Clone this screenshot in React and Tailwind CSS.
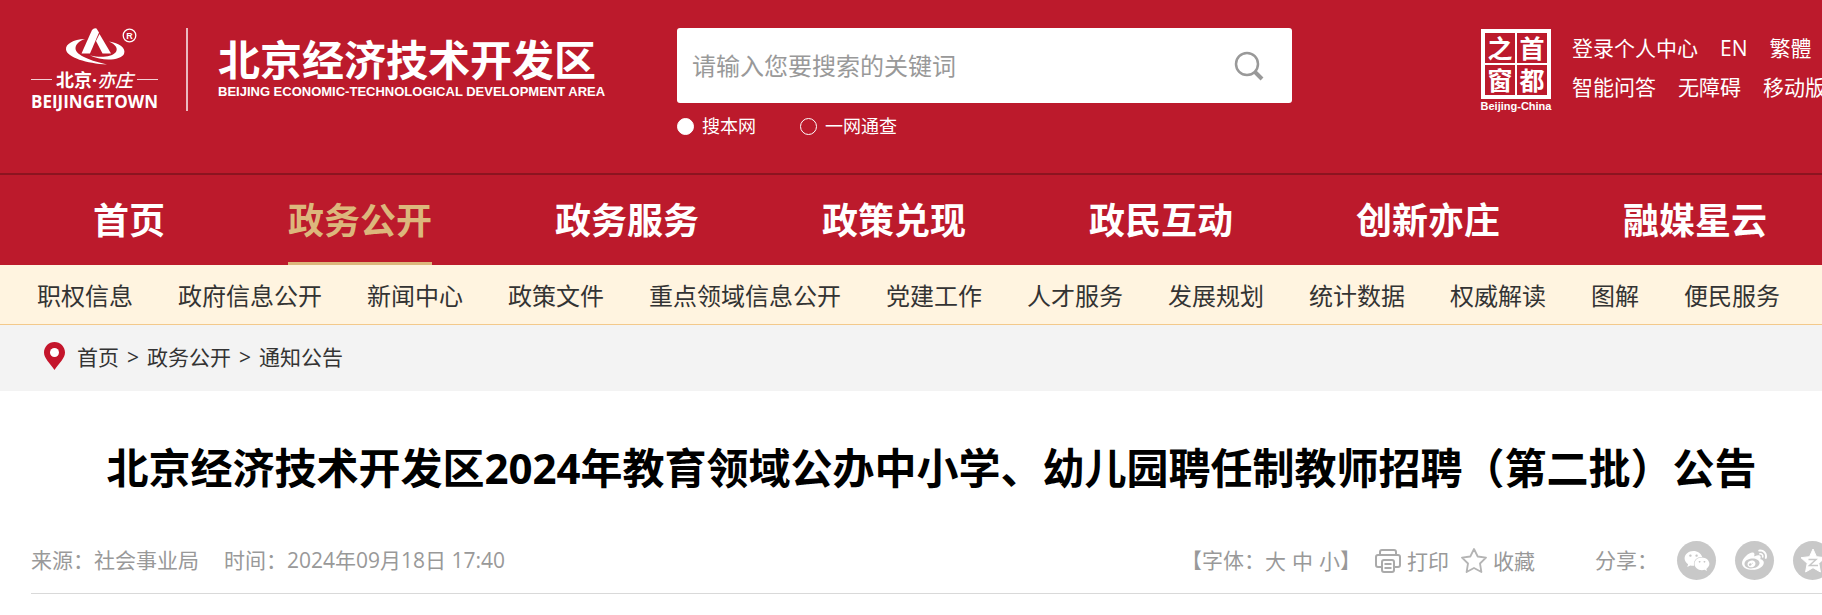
import { FaWeibo, FaWeixin } from 'react-icons/fa';

const mainNav = ['首页', '政务公开', '政务服务', '政策兑现', '政民互动', '创新亦庄', '融媒星云'];

const subNav = [
  '职权信息',
  '政府信息公开',
  '新闻中心',
  '政策文件',
  '重点领域信息公开',
  '党建工作',
  '人才服务',
  '发展规划',
  '统计数据',
  '权威解读',
  '图解',
  '便民服务',
];

const crumbs = ['首页', '政务公开', '通知公告'];

const Emblem = () => (
  <svg viewBox="0 0 72 38" className="h-[38px] w-[72px] shrink-0 ml-[34px]" fill="#fff" aria-hidden="true">
    <path d="M20 11C8 11.500 0.500 16 1 21.500C2 29.500 22 35.500 42 36.500C27 33 10.500 27.500 10.500 20.500C10.500 16.500 14 13 20 11Z" />
    <path d="M44 13.500C51 16.500 53.500 21 50.500 24.500C46 29 36 30 25 27.500C39 34 56 32 59 26C61.500 20 54 15 44 13.500Z" />
    <path d="M16.500 25.500L27 2Q29 -0.500 31.500 0.500L34 4.500L25 25.500Z" />
    <path d="M34.500 6L46 25.500H37.500L31 13Z" />
    <circle cx="64.500" cy="7.500" r="6.300" fill="none" stroke="#fff" strokeWidth="1.300" />
    <text x="64.500" y="11" textAnchor="middle" fontSize="9" fontFamily="Liberation Sans" fontWeight="700">R</text>
  </svg>
);

const Logo = () => (
  <a href="#" className="flex text-white">
    <div className="flex w-[127px] flex-col">
      <Emblem />
      <div className="flex h-[27px] items-center gap-1">
        <span className="h-px flex-1 bg-white/80" />
        <span className="flex items-center text-[18px] leading-7 font-bold">
          北京·
          <span className="text-[18px] font-medium italic">亦庄</span>
        </span>
        <span className="h-px flex-1 bg-white/80" />
      </div>
      <div className="text-[17px] leading-[18px] font-bold">BEIJINGETOWN</div>
    </div>
    <div className="ml-7 h-[83px] w-[2px] bg-white/70" />
    <div className="ml-[30px] pt-[10px]">
      <div className="text-[42px] leading-[44px] font-bold">北京经济技术开发区</div>
      <div className="font-['Liberation_Sans',sans-serif] text-[13px] leading-5 font-bold whitespace-nowrap">
        BEIJING ECONOMIC-TECHNOLOGICAL DEVELOPMENT AREA
      </div>
    </div>
  </a>
);

const SearchForm = () => (
  <form className="flex-1" onSubmit={(e) => e.preventDefault()}>
    <div className="flex h-[75px] items-center rounded-[3px] bg-white pr-7 pl-[15px]">
      <input
        type="text"
        aria-label="搜索"
        placeholder="请输入您要搜索的关键词"
        className="min-w-0 flex-1 text-[24px] leading-8 text-[#333] outline-none placeholder:text-[#999]"
      />
      <button type="submit" aria-label="搜索">
        <svg viewBox="0 0 30 30" className="size-[30px]" fill="none" stroke="#999" aria-hidden="true">
          <circle cx="13" cy="13" r="11" strokeWidth="2.500" />
          <path d="M21 21L28 28" strokeWidth="4" />
        </svg>
      </button>
    </div>
    <div className="mt-[11px] flex gap-11 text-[18px] leading-6 text-white">
      <label className="flex items-center gap-2">
        <input
          type="radio"
          name="scope"
          defaultChecked
          className="size-[17px] appearance-none rounded-full border border-white checked:bg-white"
        />
        搜本网
      </label>
      <label className="flex items-center gap-2">
        <input
          type="radio"
          name="scope"
          className="size-[17px] appearance-none rounded-full border border-white checked:bg-white"
        />
        一网通查
      </label>
    </div>
  </form>
);

const CapitalWindow = () => (
  <a href="#" className="flex w-[70px] shrink-0 flex-col items-center text-white">
    <div className="grid size-[70px] grid-cols-2 gap-[2px] border-4 border-white bg-white">
      {['之', '首', '窗', '都'].map((char) => (
        <span
          key={char}
          className="flex items-center justify-center bg-[#bc1a2c] text-[25px] leading-7 font-bold"
        >
          {char}
        </span>
      ))}
    </div>
    <span className="font-['Liberation_Sans',sans-serif] text-[11px] leading-[14px] font-bold whitespace-nowrap">
      Beijing-China
    </span>
  </a>
);

const Header = () => (
  <header className="overflow-hidden border-b-2 border-[#8c1420] bg-[#bc1a2c]">
    <div className="-mr-2 ml-[31px] flex h-[173px] items-start pt-7">
      <div className="w-[646px] shrink-0">
        <Logo />
      </div>
      <SearchForm />
      <div className="ml-[189px] flex w-[349px] shrink-0 gap-[21px] pt-px">
        <CapitalWindow />
        <div className="text-[21px] leading-[39px] whitespace-nowrap text-white">
          <div className="flex gap-[22px]">
            <a href="#">登录个人中心</a>
            <a href="#">EN</a>
            <a href="#">繁體</a>
          </div>
          <div className="flex gap-[22px]">
            <a href="#">智能问答</a>
            <a href="#">无障碍</a>
            <a href="#">移动版</a>
          </div>
        </div>
      </div>
    </div>
  </header>
);

const Nav = () => (
  <nav>
    <div className="flex h-[90px] justify-between bg-[#bc1a2c] pr-[55px] pl-[93px]">
      {mainNav.map((item) => (
        <a
          key={item}
          href="#"
          className={
            item === '政务公开'
              ? 'border-b-[3px] border-[#dcb77c] text-[36px] leading-[92px] font-bold text-[#dcb77c]'
              : 'text-[36px] leading-[92px] font-bold text-white'
          }
        >
          {item}
        </a>
      ))}
    </div>
    <div className="flex h-[60px] justify-between border-b border-[#f3c98b] bg-[#fff4e0] pr-[42px] pl-[37px]">
      {subNav.map((item) => (
        <a key={item} href="#" className="text-[24px] leading-[61px] text-[#333]">
          {item}
        </a>
      ))}
    </div>
  </nav>
);

const Breadcrumb = () => (
  <div className="flex h-[66px] items-center bg-[#f3f3f3] pl-11 text-[21px] text-[#333]">
    <svg viewBox="0 0 21 28" className="mr-3 mb-1 h-7 w-[21px]" aria-hidden="true">
      <path
        d="M10.500 0C4.700 0 0 4.700 0 10.500C0 16.500 6 21 10.500 28C15 21 21 16.500 21 10.500C21 4.700 16.300 0 10.500 0Z"
        fill="#c4152b"
      />
      <circle cx="10.500" cy="10.500" r="4.500" fill="#fff" />
    </svg>
    {crumbs.map((item, i) => (
      <span key={item} className="flex">
        {i > 0 && <span className="w-7 text-center">&gt;</span>}
        <a href="#">{item}</a>
      </span>
    ))}
  </div>
);

const PrintIcon = () => (
  <svg viewBox="0 0 26 24" className="h-6 w-[26px]" fill="none" stroke="#aaa" strokeWidth="2" aria-hidden="true">
    <path d="M5 6V3Q5 1 7 1H19Q21 1 21 3V6" />
    <path d="M6 18H3Q1 18 1 16V8Q1 6 3 6H23Q25 6 25 8V16Q25 18 23 18H20" />
    <rect x="7" y="11" width="12" height="12" rx="2" />
    <path d="M9.500 15H16.500M9.500 19H16.500" />
  </svg>
);

const StarIcon = () => (
  <svg viewBox="0 0 26 25" className="h-[25px] w-[26px]" fill="none" stroke="#b4b4b4" strokeWidth="1.800" strokeLinejoin="round" aria-hidden="true">
    <path d="M13 1L16.700 8.500L25 9.700L19 15.500L20.400 24L13 20L5.600 24L7 15.500L1 9.700L9.300 8.500Z" />
  </svg>
);

const QzoneIcon = () => (
  <svg viewBox="0 0 26 25" className="h-[25px] w-[26px]" aria-hidden="true">
    <path
      d="M13 1L16.500 8.700L25 9.700L18.800 15.300L20.400 24L13 19.700L5.600 24L7.200 15.300L1 9.700L9.500 8.700Z"
      fill="#fff"
      stroke="#fff"
      strokeLinejoin="round"
    />
    <path d="M8.500 11.500H16L9.500 17.500H18" fill="none" stroke="#c8c8c8" strokeWidth="1.500" />
  </svg>
);

const ShareButton = ({ label, children }) => (
  <a
    href="#"
    aria-label={label}
    className="flex size-[39px] items-center justify-center rounded-full bg-[#c8c8c8] text-white"
  >
    {children}
  </a>
);

const Article = () => (
  <main className="-mr-[10px] ml-[31px]">
    <h1 className="pt-[47px] text-center text-[42px] leading-[60px] font-bold whitespace-nowrap text-black">
      北京经济技术开发区2024年教育领域公办中小学、幼儿园聘任制教师招聘（第二批）公告
    </h1>
    <div className="mt-[43px] flex h-[53px] items-start justify-between border-b border-[#d9d9d9] text-[21px] leading-[38px] whitespace-nowrap text-[#999]">
      <div className="flex gap-[25px]">
        <span>来源：社会事业局</span>
        <span>时间：2024年09月18日 17:40</span>
      </div>
      <div className="flex">
        <div className="flex">
          【字体：
          <span className="flex gap-[6px]">
            <button type="button">大</button>
            <button type="button">中</button>
            <button type="button">小</button>
          </span>
          】
        </div>
        <button type="button" className="ml-[14px] flex items-center gap-[6px]">
          <PrintIcon />
          打印
        </button>
        <button type="button" className="ml-3 flex items-center gap-[6px]">
          <StarIcon />
          收藏
        </button>
        <div className="ml-[60px] flex gap-[19px]">
          <span>分享：</span>
          <ShareButton label="微信">
            <FaWeixin size={26} />
          </ShareButton>
          <ShareButton label="微博">
            <FaWeibo size={25} />
          </ShareButton>
          <ShareButton label="QQ空间">
            <QzoneIcon />
          </ShareButton>
        </div>
      </div>
    </div>
  </main>
);

export default function App() {
  return (
    <div
      lang="zh-CN"
      className="min-h-screen overflow-hidden bg-white font-['Open_Sans','Noto_Sans_CJK_SC',sans-serif]"
    >
      <Header />
      <Nav />
      <Breadcrumb />
      <Article />
    </div>
  );
}
